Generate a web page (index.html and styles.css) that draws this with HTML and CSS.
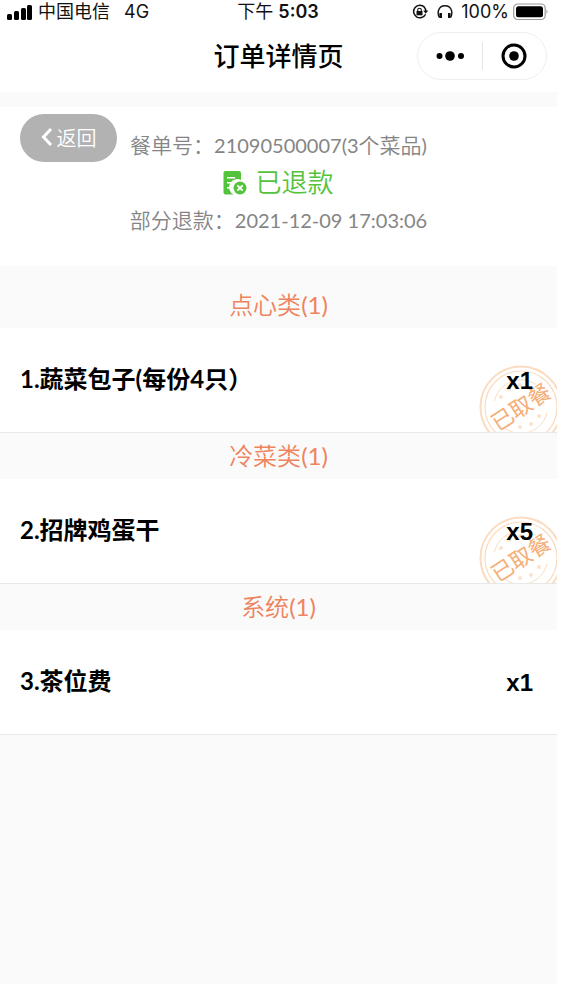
FILE: index.html
```html
<!DOCTYPE html>
<html lang="zh-CN">
<head>
    <meta charset="UTF-8">
    <meta name="viewport" content="width=device-width, initial-scale=1.0">
    <title>订单详情页</title>
    <link rel="stylesheet" href="styles.css">
</head>
<body>
    <!-- Status bar -->
    <div class="status-bar">
        <div class="status-left">
            <svg class="signal" width="26" height="16" viewBox="0 0 26 16">
                <rect x="0" y="10" width="5" height="6" rx="1.5"/>
                <rect x="7" y="7" width="5" height="9" rx="1.5"/>
                <rect x="14" y="4" width="5" height="12" rx="1.5"/>
                <rect x="20" y="1" width="5" height="15" rx="1.5"/>
            </svg>
            <span>中国电信</span>
            <span class="network">4G</span>
        </div>
        <div class="status-time">下午 <b>5:03</b></div>
        <div class="status-right">
            <svg width="17" height="16" viewBox="0 0 17 16" fill="none" stroke="#111" stroke-width="1.5">
                <path d="M12.5 3.2A6.3 6.3 0 1 0 13.6 10.2"/>
                <path d="M12.2 2.9A6.3 6.3 0 0 1 13.8 7"/>
                <path d="M11.2 6.5h5l-2.5 3.2z" fill="#111" stroke="none"/>
                <rect x="4.5" y="7" width="6" height="4.3" fill="#111" stroke="none"/>
                <path d="M5.7 7.3V6a1.8 1.8 0 0 1 3.6 0v1.3" stroke-width="1.1"/>
            </svg>
            <svg class="headphones" width="16" height="16" viewBox="0 0 16 16" fill="none" stroke="#111" stroke-width="1.4">
                <path d="M2.6 13.5C.9 11 .9 8.500 1.500 6.500 2.500 3.300 5 1.800 8 1.800s5.500 1.500 6.500 4.700c.6 2 .6 4.500-1.100 7"/>
                <path d="M3.700 9v5M12.300 9v5" stroke-width="2.600"/>
            </svg>
            <span>100%</span>
            <svg class="battery" width="36" height="18" viewBox="0 0 36 18">
                <rect x=".7" y="1" width="31.500" height="15.500" rx="4" fill="none" stroke="#999" stroke-width="1.200"/>
                <rect x="3" y="3.200" width="27" height="11" rx="2.500"/>
                <path d="M33.500 6.500q2 2.200 0 4.500z" fill="#999"/>
            </svg>
        </div>
    </div>

    <!-- Mini program title bar -->
    <header>
        <h1>订单详情页</h1>
        <div class="capsule">
            <button type="button" aria-label="更多">
                <svg width="30" height="26" viewBox="0 0 30 26">
                    <circle cx="4.500" cy="13" r="3"/>
                    <circle cx="15" cy="13" r="4.800"/>
                    <circle cx="26" cy="13" r="3"/>
                </svg>
            </button>
            <button type="button" aria-label="关闭">
                <svg width="26" height="26" viewBox="0 0 26 26">
                    <circle cx="13" cy="13" r="11" fill="none" stroke="#000" stroke-width="3"/>
                    <circle cx="13" cy="13" r="4.800"/>
                </svg>
            </button>
        </div>
    </header>

    <main>
        <section class="summary">
            <button type="button" class="back-btn">
                <svg width="12" height="20" viewBox="0 0 12 20">
                    <path d="M10 2L2.500 10L10 18" fill="none" stroke="#fff" stroke-width="3"/>
                </svg>
                返回
            </button>
            <p>餐单号：<span>21090500007(3</span>个菜品<span>)</span></p>
            <p class="order-state">
                <svg width="24" height="24" viewBox="0 0 24 24">
                    <path d="M2.500 0H16q2 0 2 2V9A8 8 0 0 0 10.500 23.500H2.500Q.5 23.500.5 21.500V2Q.5 0 2.500 0z" fill="#54c33c"/>
                    <path d="M4 6.700h8M4 11.800h5.500M4 16.700h4" stroke="#fff" stroke-width="1.500"/>
                    <circle cx="17" cy="17" r="7.800" fill="#fff"/>
                    <circle cx="17" cy="17" r="6.500" fill="#54c33c"/>
                    <path d="M14.300 14.300l5.400 5.400M19.700 14.300l-5.400 5.400" stroke="#fff" stroke-width="1.900"/>
                </svg>
                已退款
            </p>
            <p>部分退款：<span>2021-12-09 17:03:06</span></p>
        </section>

        <section class="group">
            <h2>点心类<span>(1)</span></h2>
            <div class="item">
                <span>1.蔬菜包子(每份4只）</span>
                <svg class="stamp" viewBox="0 0 84 84">
                    <use href="#stamp-art"/>
                </svg>
                <span class="count">x1</span>
            </div>
        </section>

        <section class="group">
            <h2>冷菜类<span>(1)</span></h2>
            <div class="item">
                <span>2.招牌鸡蛋干</span>
                <svg class="stamp" viewBox="0 0 84 84">
                    <use href="#stamp-art"/>
                </svg>
                <span class="count">x5</span>
            </div>
        </section>

        <section class="group">
            <h2>系统<span>(1)</span></h2>
            <div class="item">
                <span>3.茶位费</span>
                <span class="count">x1</span>
            </div>
        </section>
    </main>

    <!-- Shared stamp drawing -->
    <svg class="defs" width="0" height="0">
        <defs>
            <g id="stamp-art">
                <g fill="none" stroke="#fbdcc0">
                    <circle cx="42" cy="42" r="40.500" stroke-width="2"/>
                    <circle cx="42" cy="42" r="36" stroke-width="1.200"/>
                    <path d="M15.500 36A27 27 0 0 1 57 19.500M68 48A27 27 0 0 1 27 64" stroke-width="1"/>
                </g>
                <g fill="#fce3cd">
                    <circle cx="22" cy="32" r="2"/>
                    <circle cx="30" cy="24" r="2"/>
                    <circle cx="41" cy="20" r="2"/>
                    <circle cx="41" cy="62" r="2"/>
                    <circle cx="52" cy="59" r="2"/>
                    <circle cx="60" cy="51" r="2"/>
                </g>
                <text class="stamp-text" x="42" y="50" text-anchor="middle" transform="rotate(-33 42 42)">已取餐</text>
            </g>
        </defs>
    </svg>
</body>
</html>
```
FILE: styles.css
```css
* {
    margin: 0;
    padding: 0;
    box-sizing: border-box;
}
body {
    font-family: Lato, "Noto Sans CJK SC", sans-serif;
    background-color: #fff;
    color: #000;
    display: flex;
    flex-direction: column;
    min-height: 100vh;
    padding-right: 7px;
}
button {
    font-family: inherit;
    border: none;
    background: none;
    cursor: pointer;
}

/* Status bar */
.status-bar {
    display: grid;
    grid-template-columns: 1fr auto 1fr;
    align-items: center;
    height: 24px;
    padding: 0 8px 0 7px;
    font-family: Inter, "Noto Sans CJK SC", sans-serif;
    font-size: 18px;
    line-height: 24px;
    color: #111;
}
.status-left,
.status-right {
    display: flex;
    align-items: center;
}
.status-right {
    justify-content: flex-end;
}
.signal {
    margin-right: 5px;
}
.network {
    margin-left: 14px;
}
.status-time b {
    font-weight: 600;
}
.headphones {
    margin: 0 8px;
}
.battery {
    margin-left: 4px;
}

/* Title bar */
header {
    position: relative;
    display: flex;
    align-items: center;
    justify-content: center;
    height: 68px;
    padding-bottom: 4px;
}
h1 {
    font-size: 26px;
    font-weight: 500;
    line-height: 36px;
}
.capsule {
    position: absolute;
    top: 8px;
    right: 10px;
    display: flex;
    width: 130px;
    height: 48px;
    border: 1px solid #eee;
    border-radius: 24px;
}
.capsule button {
    flex: 1;
    display: flex;
    align-items: center;
    justify-content: center;
}
.capsule button + button::before {
    content: "";
    position: absolute;
    left: 64px;
    height: 28px;
    border-left: 1px solid #e5e5e5;
}

/* Order summary */
main {
    flex: 1;
    background-color: #fafafa;
    padding-top: 15px;
}
.summary {
    position: relative;
    background-color: #fff;
    margin-bottom: 16px;
    padding: 20px 0 28px;
    text-align: center;
    color: #858585;
    font-size: 21px;
    font-weight: 350;
    line-height: 36px;
}
.summary p span {
    font-size: 20px;
    font-weight: 400;
}
.summary .order-state {
    display: flex;
    align-items: center;
    justify-content: center;
    gap: 8px;
    color: #54c33c;
    font-size: 26px;
    line-height: 39px;
}
.back-btn {
    position: absolute;
    top: 7px;
    left: 20px;
    display: flex;
    align-items: center;
    justify-content: center;
    gap: 4px;
    width: 97px;
    height: 48px;
    padding-bottom: 2px;
    border-radius: 24px;
    background-color: #b2b2b2;
    color: #fff;
    font-size: 20px;
    font-weight: 350;
}

/* Dish groups */
h2 {
    color: #ee8360;
    font-size: 24px;
    font-weight: 350;
    line-height: 46px;
    text-align: center;
}
h2 span {
    font-weight: 400;
}
.item {
    position: relative;
    display: flex;
    align-items: center;
    justify-content: space-between;
    height: 105px;
    padding: 0 24px 2px 20px;
    overflow: hidden;
    background-color: #fff;
    border-bottom: 1px solid #e8e8e8;
    font-size: 24px;
    font-weight: 700;
    line-height: 36px;
}
.count {
    position: relative;
    padding-top: 4px;
    font-family: "Liberation Sans", Arial, sans-serif;
}
.stamp {
    position: absolute;
    top: 37px;
    right: -6px;
    width: 84px;
    height: 84px;
}
.stamp-text {
    font-family: "Noto Sans CJK SC", sans-serif;
    font-size: 22px;
    font-weight: 400;
    fill: #f5ae76;
}
.defs {
    position: absolute;
}
```
